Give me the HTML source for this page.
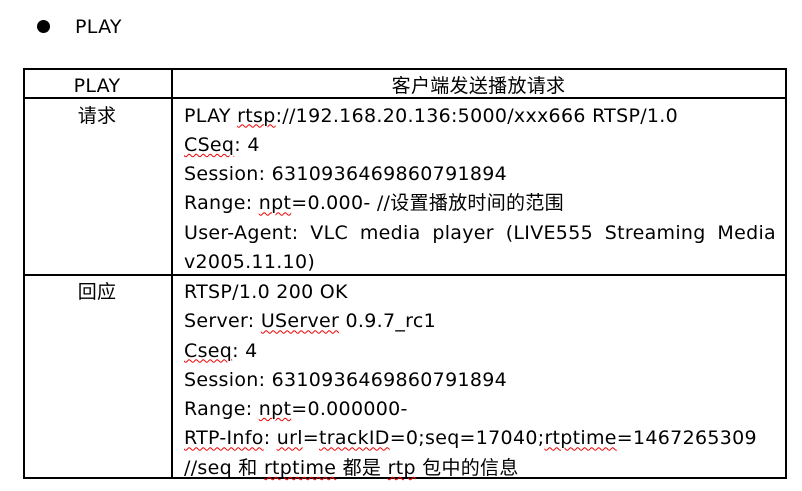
<!DOCTYPE html>
<html><head><meta charset="utf-8"><style>
body{margin:0;width:802px;height:491px;background:#fff;position:relative;overflow:hidden;font-family:"DejaVu Sans","Noto Sans CJK SC",sans-serif;font-size:19px;color:#000;letter-spacing:0.3px;}
.a{position:absolute;line-height:29.3px;white-space:nowrap;}
.l{position:absolute;background:#000;}
.w{text-decoration:underline wavy #e00;text-decoration-thickness:1px;text-underline-offset:2px;}
.j{white-space:normal;text-align:justify;text-align-last:left;}
</style></head><body>
<div style="position:absolute;left:37px;top:20px;width:13px;height:13px;border-radius:50%;background:#000"></div>
<div class="a" style="left:75px;top:12.8px">PLAY</div>

<div class="l" style="left:23px;top:68px;width:764px;height:1.5px"></div>
<div class="l" style="left:23px;top:97px;width:764px;height:1.5px"></div>
<div class="l" style="left:23px;top:274px;width:764px;height:1.5px"></div>
<div class="l" style="left:23px;top:477px;width:764px;height:1.5px"></div>
<div class="l" style="left:23px;top:68px;width:1.5px;height:411px"></div>
<div class="l" style="left:171px;top:68px;width:1.5px;height:411px"></div>
<div class="l" style="left:785px;top:68px;width:1.5px;height:411px"></div>

<div class="a" style="left:23px;width:148px;text-align:center;top:71.5px">PLAY</div>
<div class="a" style="left:172px;width:613px;text-align:center;top:71.5px">客户端发送播放请求</div>
<div class="a" style="left:23px;width:148px;text-align:center;top:101.5px">请求</div>
<div class="a" style="left:23px;width:148px;text-align:center;top:278px">回应</div>

<div class="a" style="left:184px;top:101.5px;width:592px">
<div>PLAY <span class="w">rtsp</span>://192.168.20.136:5000/xxx666 RTSP/1.0</div>
<div><span class="w">CSeq</span>: 4</div>
<div>Session: 6310936469860791894</div>
<div>Range: <span class="w">npt</span>=0.000- //设置播放时间的范围</div>
<div class="j">User-Agent: VLC media player (LIVE555 Streaming Media v2005.11.10)</div>
</div>

<div class="a" style="left:184px;top:278px">
<div>RTSP/1.0 200 OK</div>
<div>Server: <span class="w">UServer</span> 0.9.7_rc1</div>
<div><span class="w">Cseq</span>: 4</div>
<div>Session: 6310936469860791894</div>
<div>Range: <span class="w">npt</span>=0.000000-</div>
<div><span class="w">RTP-Info</span>: <span class="w">url</span>=<span class="w">trackID</span>=0;seq=17040;<span class="w">rtptime</span>=1467265309</div>
<div>//seq 和 <span class="w">rtptime</span> 都是 <span class="w">rtp</span> 包中的信息</div>
</div>
</body></html>
